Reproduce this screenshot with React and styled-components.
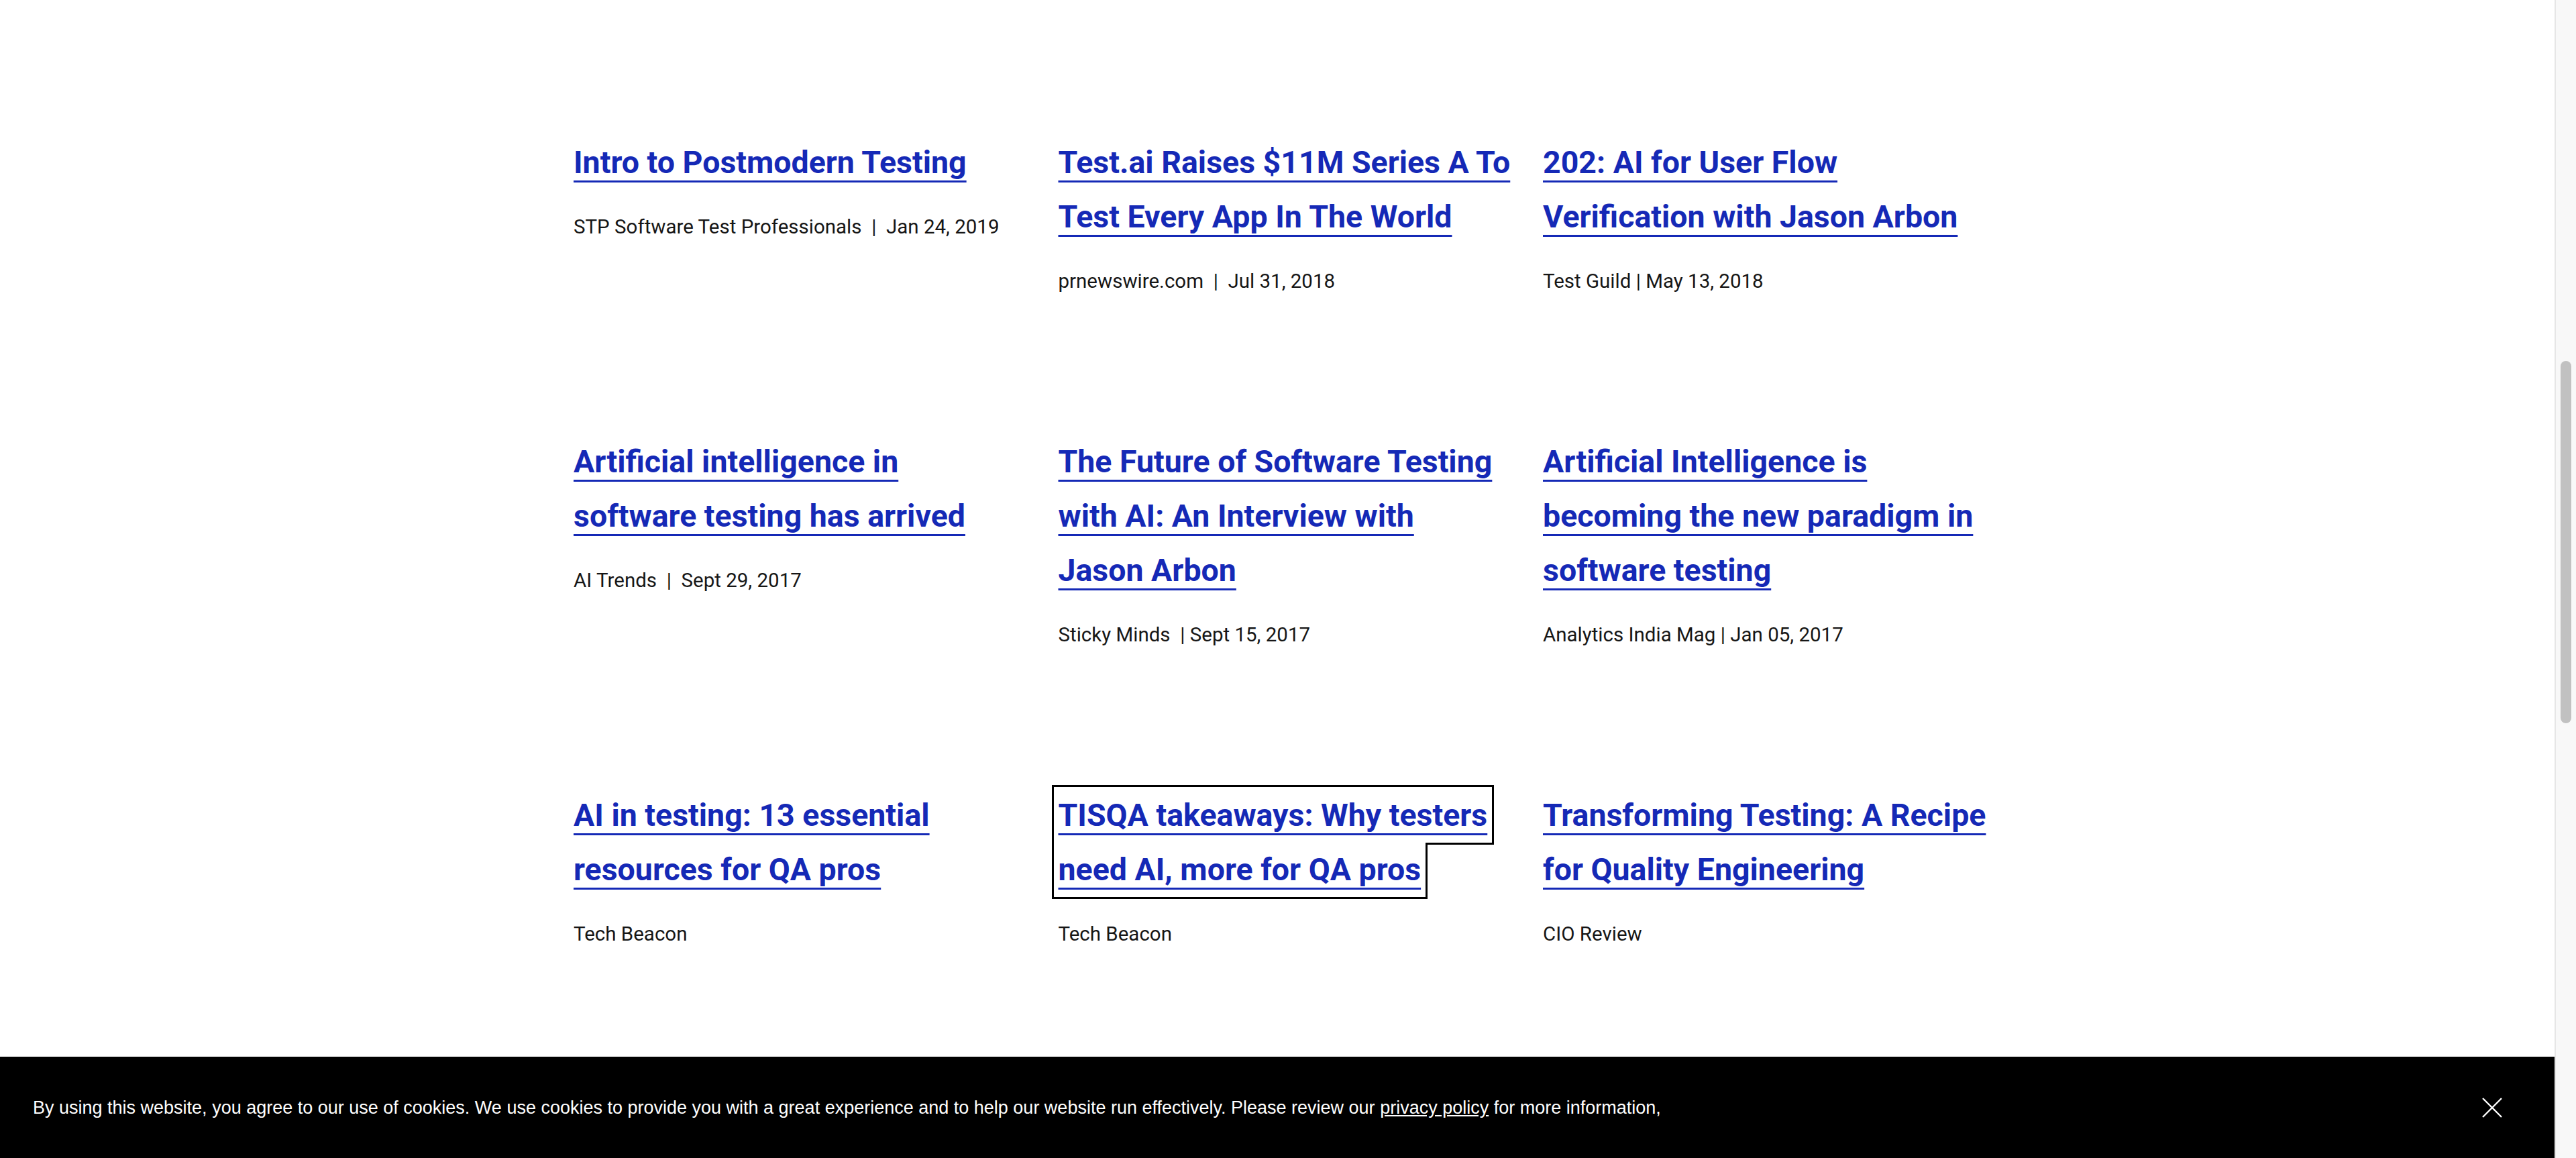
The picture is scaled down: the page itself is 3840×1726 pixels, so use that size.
import React from "react";
import styled, { createGlobalStyle } from "styled-components";

const GlobalStyle = createGlobalStyle`
    html, body {
        margin: 0;
        padding: 0;
        background: #ffffff;
    }
    * {
        box-sizing: border-box;
    }
`;

// 기사 목록 데이터 (줄바꿈은 원본 그대로)
const articles = [
    { title: ["Intro to Postmodern Testing"], meta: "STP Software Test Professionals\u00a0 |\u00a0 Jan 24, 2019" },
    { title: ["Test.ai Raises $11M Series A To", "Test Every App In The World"], meta: "prnewswire.com\u00a0 |\u00a0 Jul 31, 2018" },
    { title: ["202: AI for User Flow", "Verification with Jason Arbon"], meta: "Test Guild | May 13, 2018" },
    { title: ["Artificial intelligence in", "software testing has arrived"], meta: "AI Trends\u00a0 |\u00a0 Sept 29, 2017" },
    { title: ["The Future of Software Testing", "with AI: An Interview with", "Jason Arbon"], meta: "Sticky Minds\u00a0 | Sept 15, 2017" },
    { title: ["Artificial Intelligence is", "becoming the new paradigm in", "software testing"], meta: "Analytics India Mag | Jan 05, 2017" },
    { title: ["AI in testing: 13 essential", "resources for QA pros"], meta: "Tech Beacon" },
    { title: ["TISQA takeaways: Why testers", "need AI, more for QA pros"], meta: "Tech Beacon", focused: true },
    { title: ["Transforming Testing: A Recipe", "for Quality Engineering"], meta: "CIO Review" },
];

const App = () => {
    return (
        <Frame>
            <GlobalStyle />
            <Viewport>
                <Content>
                    <ArticleGrid>
                        {articles.map((item, i) => (
                            <Card key={i}>
                                <Title>
                                    <TitleLink href="#" $focused={item.focused}>
                                        {item.title.map((line, j) => (
                                            <React.Fragment key={j}>
                                                {j > 0 && <br />}
                                                {line}
                                            </React.Fragment>
                                        ))}
                                    </TitleLink>
                                </Title>
                                <Meta>{item.meta}</Meta>
                            </Card>
                        ))}
                    </ArticleGrid>
                </Content>
                <CookieBar>
                    <CookieText>
                        By using this website, you agree to our use of cookies. We use cookies to provide you with a great experience and to help our
                        website run effectively. Please review our <CookieLink href="#">privacy policy</CookieLink> for more information,
                    </CookieText>
                    <CloseButton aria-label="close">
                        <svg width="30" height="30" viewBox="0 0 30 30">
                            <path d="M1 1 L29 29 M29 1 L1 29" stroke="#ffffff" strokeWidth="2.4" />
                        </svg>
                    </CloseButton>
                </CookieBar>
            </Viewport>
            <ScrollRail>
                <ScrollThumb />
            </ScrollRail>
        </Frame>
    );
};

export default App;

const Frame = styled.div`
    display: flex;
    height: 100vh;
    overflow: hidden;
    background: #ffffff;
`;

const Viewport = styled.div`
    position: relative;
    flex: 1;
    overflow: hidden;
`;

const Content = styled.main`
    padding: 201px 0 0 855px;
`;

const ArticleGrid = styled.div`
    display: grid;
    grid-template-columns: repeat(3, 674px);
    column-gap: 48.5px;
    row-gap: 208px;
    align-items: start;
`;

const Card = styled.article`
    display: flex;
    flex-direction: column;
`;

const Title = styled.h3`
    margin: 0;
    font-family: Roboto, "Liberation Sans", sans-serif;
    font-size: 46.5px;
    font-weight: 700;
    line-height: 81px;
    white-space: nowrap;
`;

const TitleLink = styled.a`
    color: #1529b6;
    text-decoration: underline;
    text-decoration-thickness: 3px;
    text-underline-offset: 12px;
    padding: 7.5px 0;
    outline: ${(p) => (p.$focused ? "3px solid #000000" : "none")};
    outline-offset: 7px;
`;

const Meta = styled.p`
    margin: 36px 0 0;
    font-family: Roboto, "Liberation Sans", sans-serif;
    font-size: 29.5px;
    font-weight: 400;
    line-height: 40px;
    color: #161616;
    white-space: pre;
`;

const CookieBar = styled.div`
    position: absolute;
    left: 0;
    right: 0;
    bottom: 0;
    height: 151px;
    background: #000000;
    display: flex;
    align-items: center;
    justify-content: space-between;
    padding: 0 78px 0 49px;
`;

const CookieText = styled.p`
    margin: 0;
    font-family: "Liberation Sans", Arial, sans-serif;
    font-size: 27px;
    line-height: 34px;
    color: #ffffff;
`;

const CookieLink = styled.a`
    color: #ffffff;
    text-decoration: underline;
`;

const CloseButton = styled.button`
    display: flex;
    padding: 0;
    border: 0;
    background: transparent;
    cursor: pointer;
`;

const ScrollRail = styled.div`
    width: 32px;
    flex-shrink: 0;
    background: #f8f8f8;
    border-left: 2px solid #e6e6e6;
    padding-top: 538px;
    display: flex;
    justify-content: center;
`;

const ScrollThumb = styled.div`
    width: 16px;
    height: 540px;
    border-radius: 8px;
    background: #c1c1c1;
`;
